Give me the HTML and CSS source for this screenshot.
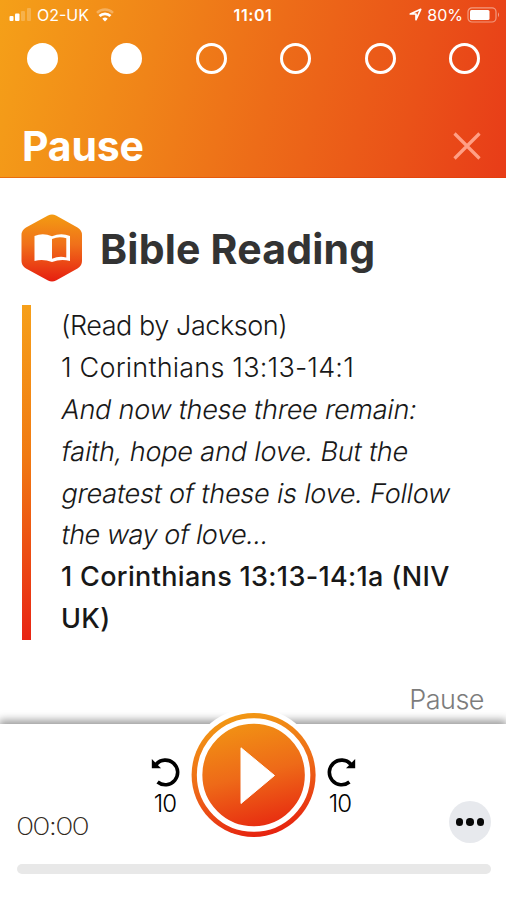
FILE: index.html
```html
<!DOCTYPE html>
<html lang="en">
<head>
<meta charset="utf-8">
<title>Pause</title>
<link rel="stylesheet" href="styles.css">
</head>
<body>
<header class="header">
  <div class="status">
    <div class="status-left">
      <svg class="signal" width="24" height="14" viewBox="0 0 24 14"><g fill="#fff"><rect x="0.5" y="8" width="4" height="5" rx="1"/><rect x="6" y="5.5" width="4.500" height="7.500" rx="1"/><g opacity=".22"><rect x="12" y="3" width="4" height="10" rx="1"/><rect x="18" y="0" width="4" height="13" rx="1"/></g></g></svg>
      <span class="carrier">O2-UK</span>
      <svg class="wifi" width="18" height="14" viewBox="0 0 18 14"><g fill="none" stroke="#fff" stroke-width="2.500"><path d="M1 4.800a11.500 11.500 0 0 1 16 0" opacity=".3"/><path d="M3.500 8a8 8 0 0 1 11 0" stroke-width="2.800"/></g><path d="M9 13.500L6.300 10.700a4 4 0 0 1 5.400 0z" fill="#fff"/></svg>
    </div>
    <span class="clock">11:01</span>
    <div class="status-right">
      <svg class="location" width="13" height="13" viewBox="0 0 13 13"><path d="M1.300 6L11.700 1.300 7 11.700V6z" fill="none" stroke="#fff" stroke-width="1.700" stroke-linejoin="round"/></svg>
      <span class="percent">80%</span>
      <svg width="33" height="16" viewBox="0 0 33 16"><rect x="1" y=".8" width="28" height="14.200" rx="4" fill="none" stroke="#fff" stroke-opacity=".45" stroke-width="1.200"/><rect x="3" y="3" width="19.500" height="10" rx="1.500" fill="#fff"/><path d="M31 5.300q2 2.500 0 5z" fill="#fff" opacity=".5"/></svg>
    </div>
  </div>
  <div class="steps">
    <i class="step done"></i><i class="step done"></i><i class="step"></i><i class="step"></i><i class="step"></i><i class="step"></i>
  </div>
  <div class="title-row">
    <h1 class="title">Pause</h1>
    <svg class="close" width="28" height="28" viewBox="0 0 28 28"><path d="M1.500 1.500L26.500 26.500M26.500 1.500L1.500 26.500" stroke="#ff9f85" stroke-width="3.200"/></svg>
  </div>
</header>
<main class="content">
  <div class="section-head">
    <svg class="hex" width="62" height="68" viewBox="0 0 62 68">
      <defs><linearGradient id="hexFill" x1="0" y1="0" x2="0" y2="1"><stop offset="0" stop-color="#f39c12"/><stop offset=".45" stop-color="#f0701a"/><stop offset="1" stop-color="#e61e10"/></linearGradient></defs>
      <path d="M27 1.500q4-2.200 8 0L56.500 13.500q4.500 2.600 4.500 7.500v26q0 5-4.500 7.500L35 66.500q-4 2.200-8 0L5 54.500Q.5 52 .5 47v-26Q.5 16.100 5 13.500z" fill="url(#hexFill)"/>
      <path d="M13.500 22Q22 18.500 31 22.300 40 18.500 49 22V47Q40 44.500 31 48 22 44.500 13.500 47zM31 25V44.800Q38 41.700 45.300 43.500V24.300Q38 21.800 31 25z" fill="#fff" fill-rule="evenodd"/>
    </svg>
    <h2 class="section-title">Bible Reading</h2>
  </div>
  <div class="passage">
    <div class="l1">(Read by Jackson)</div>
    <div class="l2">1 Corinthians 13:13-14:1</div>
    <div class="l3 quote">And now these three remain:</div>
    <div class="l4 quote">faith, hope and love. But the</div>
    <div class="l5 quote">greatest of these is love. Follow</div>
    <div class="l6 quote">the way of love...</div>
    <div class="l7 strong">1 Corinthians 13:13-14:1a (NIV</div>
    <div class="l8 strong">UK)</div>
  </div>
  <div class="next">Pause</div>
</main>
<footer class="player">
  <div class="controls">
    <div class="skip back">
      <svg width="30" height="30" viewBox="0 0 30 30"><path d="M5.200 7.200A12.300 12.300 0 1 1 6.600 25" fill="none" stroke="#000" stroke-width="3.600"/><path d="M.8 2V11.300H10z"/></svg>
      <span class="ten">10</span>
    </div>
    <svg class="play" width="136" height="136" viewBox="0 0 136 136">
      <defs><linearGradient id="playFill" x1=".35" y1="0" x2=".6" y2="1"><stop offset="0" stop-color="#f29913"/><stop offset=".5" stop-color="#ee6a18"/><stop offset="1" stop-color="#e6210f"/></linearGradient></defs>
      <circle cx="68" cy="68" r="67" fill="#fff"/>
      <circle cx="68.600" cy="68" r="62" fill="url(#playFill)"/>
      <circle cx="68.600" cy="68" r="54" fill="none" stroke="#fff" stroke-width="5.500"/>
      <path d="M56 40.800L89.500 68.500 56 96.500z" fill="#fff" stroke="#fff" stroke-linejoin="round"/>
    </svg>
    <div class="skip">
      <svg width="30" height="30" viewBox="0 0 30 30"><g transform="matrix(-1 0 0 1 30 0)"><path d="M5.200 7.200A12.300 12.300 0 1 1 6.600 25" fill="none" stroke="#000" stroke-width="3.600"/><path d="M.8 2V11.300H10z"/></g></svg>
      <span class="ten">10</span>
    </div>
  </div>
  <div class="time-row">
    <span class="time">00:00</span>
    <span class="more"><i></i><i></i><i></i></span>
  </div>
  <div class="track"></div>
</footer>
</body>
</html>
```
FILE: styles.css
```css
* { box-sizing: border-box; }
body { margin: 0; width: 506px; height: 900px; overflow: hidden; background: #fff; font-family: Inter, "Liberation Sans", sans-serif; color: #222; }
svg { display: block; flex: none; }
h1, h2 { margin: 0; }
.header { height: 178px; background: linear-gradient(103deg, #f5a018 0%, #f08418 30%, #ed6c18 53%, #ea5218 80%, #e83c18 100%); color: #fff; border-bottom: 1px solid rgba(220, 50, 0, .45); }
.status { height: 29px; display: grid; grid-template-columns: 1fr auto 1fr; align-items: center; padding: 0 6px 0 9px; font-size: 16px; line-height: 20px; }
.status-left, .status-right { display: flex; align-items: center; }
.status-right { justify-content: flex-end; }
.signal { margin-right: 4px; }
.carrier { letter-spacing: 0; }
.wifi { margin-left: 7px; }
.clock { font-weight: 600; letter-spacing: .6px; margin-right: 3px; }
.location { margin-right: 5px; }
.percent { margin-right: 4px; }
.steps { display: flex; justify-content: space-between; padding: 14px 26px 0 27px; }
.step { width: 31px; height: 31px; border: 3px solid #fff; border-radius: 50%; }
.done { background: #fff; }
.title-row { display: flex; justify-content: space-between; align-items: center; padding: 0 25px 0 22px; margin-top: 48px; height: 48px; }
.title { font-size: 41px; line-height: 48px; font-weight: 700; letter-spacing: -.2px; }
.content { height: 546px; padding: 36px 22px 0 21px; }
.section-head { display: flex; align-items: center; height: 68px; }
.section-title { margin-left: 17px; padding-top: 1px; font-size: 41px; line-height: 50px; font-weight: 650; letter-spacing: .2px; color: #333; white-space: nowrap; }
.passage { margin: 23px 0 0 1px; height: 335px; padding-left: 30px; border-left: 9px solid; border-image: linear-gradient(#f6a01a, #f07a12 45%, #e82414) 1; font-size: 27px; line-height: 41.880px; font-weight: 350; color: #181818; white-space: nowrap; }
.quote { transform: skewX(-10deg); transform-origin: 0 75%; margin-left: -1.500px; }
.strong { font-weight: 550; color: #181818; }
.l1 { letter-spacing: -.45px; }
.l2 { letter-spacing: .2px; }
.l3 { letter-spacing: -.22px; }
.l4 { letter-spacing: -.15px; }
.l5 { letter-spacing: -.2px; }
.l6 { letter-spacing: -.42px; }
.l7, .l8 { letter-spacing: .33px; }
.next { margin-top: 43px; text-align: right; font-size: 27px; line-height: 34px; font-weight: 350; letter-spacing: -.5px; color: #7c7c7c; }
.player { position: relative; height: 176px; background: #fff; box-shadow: 0 -3px 8px 1px rgba(0, 0, 0, .38); }
.controls { display: flex; justify-content: center; align-items: flex-start; height: 91px; }
.play { margin: -17px 0 0; }
.skip { width: 40px; height: 62px; margin-top: 33px; display: flex; flex-direction: column; align-items: center; }
.back { padding-left: 2px; }
.ten { margin-top: 3px; font-family: Inter, sans-serif; font-size: 24px; font-weight: 300; line-height: 28px; letter-spacing: -.8px; padding-right: 2px; color: #000; }
.time-row { display: flex; justify-content: space-between; align-items: center; padding: 0 15px 0 17px; height: 42px; margin-top: -14px; }
.time { font-family: Lato, sans-serif; font-size: 25px; font-weight: 300; margin-top: 6px; transform: scaleX(1.12); transform-origin: 0 50%; color: #302820; }
.more { width: 42px; height: 42px; border-radius: 50%; background: #e7e9ed; display: flex; align-items: center; justify-content: center; gap: 3px; }
.more i { width: 7.500px; height: 7.500px; border-radius: 50%; background: #080808; }
.track { margin: 21px 15px 0 17px; height: 10px; border-radius: 5px; background: #e8e8e8; }
```
